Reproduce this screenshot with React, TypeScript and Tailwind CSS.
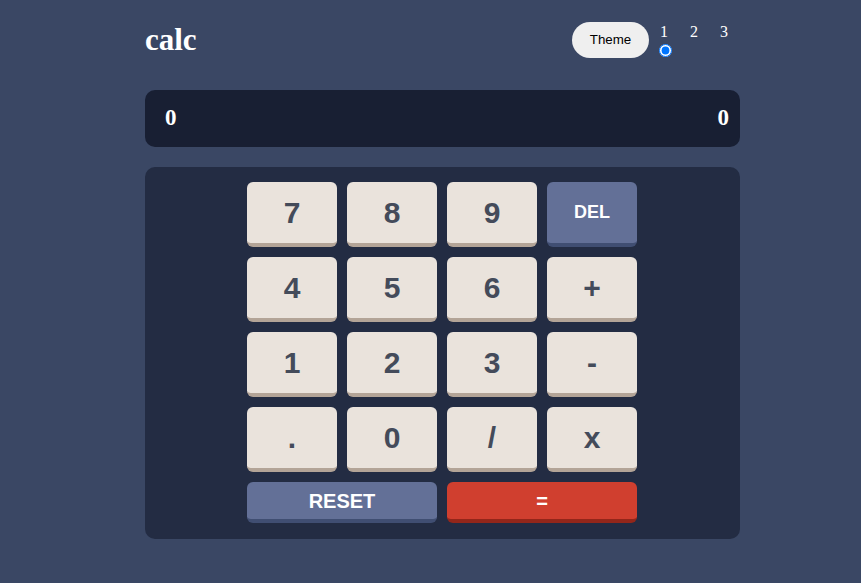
const KEYS = ['7', '8', '9', 'DEL', '4', '5', '6', '+', '1', '2', '3', '-', '.', '0', '/', 'x'];

function Key({ label }: { label: string }) {
  if (label === 'DEL') {
    return (
      <button className="h-[65px] rounded-[6px] border-b-4 border-[#404e72] bg-[#637097] text-[18px] font-bold text-white">
        {label}
      </button>
    );
  }
  return (
    <button className="h-[65px] rounded-[6px] border-b-4 border-[#b3a497] bg-[#eae3dc] text-[30px] font-bold text-[#444b5a]">
      {label}
    </button>
  );
}

export default function App() {
  return (
    <div className="min-h-[583px] bg-[#3a4764] font-['Liberation_Sans',Arial,sans-serif]">
      <div className="ml-[145px] w-[595px] pt-[22px]">
        <header className="flex items-start">
          <h1 className="font-['Liberation_Serif','Times_New_Roman',serif] text-[31px] leading-[36px] font-bold text-white">
            calc
          </h1>
          <div className="mr-[8px] ml-auto flex items-start">
            <button className="h-[36px] w-[77px] rounded-full bg-[#efefef] text-[13.33px] text-black">
              Theme
            </button>
            <div className="ml-[7px] grid grid-cols-[16px_16px_16px] gap-x-[14px] font-['Liberation_Serif','Times_New_Roman',serif] text-[16px] leading-[18px] text-white">
              <span className="pt-[1px] text-center">1</span>
              <span className="pt-[1px] text-center">2</span>
              <span className="pt-[1px] text-center">3</span>
              <span className="mt-[3px] flex justify-center pl-[3px]">
                <input type="radio" checked readOnly className="m-0 h-[13px] w-[13px]" />
              </span>
            </div>
          </div>
        </header>

        <div className="mt-[32px] flex h-[57px] items-center justify-between rounded-[10px] bg-[#181f33] pr-[11px] pl-[20px] font-['Liberation_Serif','Times_New_Roman',serif] text-[23px] font-bold text-white">
          <span>0</span>
          <span>0</span>
        </div>

        <div className="mt-[20px] h-[372px] rounded-[10px] bg-[#232c43] pt-[15px] pl-[102px]">
          <div className="grid w-[390px] grid-cols-4 gap-[10px]">
            {KEYS.map((k) => (
              <Key key={k} label={k} />
            ))}
            <button className="col-span-2 h-[41px] rounded-[6px] border-b-4 border-[#404e72] bg-[#637097] text-[20px] font-bold text-white">
              RESET
            </button>
            <button className="col-span-2 h-[41px] rounded-[6px] border-b-4 border-[#93261a] bg-[#d03f2f] text-[20px] font-bold text-white">
              =
            </button>
          </div>
        </div>
      </div>
    </div>
  );
}
